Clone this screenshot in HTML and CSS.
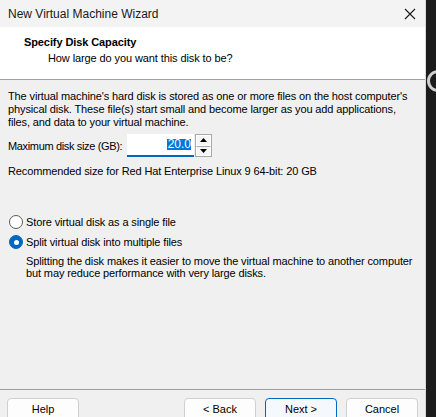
FILE: index.html
```html
<!DOCTYPE html>
<html>
<head>
<meta charset="utf-8">
<link rel="stylesheet" href="styles.css">
</head>
<body>
<div class="screen">
  <div class="window">
    <div class="titlebar">
      <span class="title">New Virtual Machine Wizard</span>
      <svg class="close" width="12" height="12" viewBox="0 0 12 12"><path d="M1 1L11 11M11 1L1 11" stroke="#1a1a1a" stroke-width="1.1" fill="none"/></svg>
    </div>
    <div class="header">
      <div class="h-title">Specify Disk Capacity</div>
      <div class="h-sub">How large do you want this disk to be?</div>
    </div>
    <div class="content">
      <p class="intro">The virtual machine's hard disk is stored as one or more files on the host computer's<br>physical disk. These file(s) start small and become larger as you add applications,<br>files, and data to your virtual machine.</p>
      <div class="size-row">
        <span class="label">Maximum disk size (GB):</span>
        <div class="input"><span class="sel">20.0</span></div>
        <div class="spin">
          <div class="spin-btn"><svg width="7" height="4" viewBox="0 0 7 4"><path d="M3.5 0L7 4H0Z" fill="#000"/></svg></div>
          <div class="spin-btn"><svg width="7" height="4" viewBox="0 0 7 4"><path d="M0 0H7L3.5 4Z" fill="#000"/></svg></div>
        </div>
      </div>
      <p class="rec">Recommended size for Red Hat Enterprise Linux 9 64-bit: 20 GB</p>
      <div class="radios">
        <div class="radio-row"><span class="radio"></span><span>Store virtual disk as a single file</span></div>
        <div class="radio-row"><span class="radio checked"></span><span>Split virtual disk into multiple files</span></div>
        <p class="desc">Splitting the disk makes it easier to move the virtual machine to another computer<br>but may reduce performance with very large disks.</p>
      </div>
    </div>
    <div class="footer">
      <button class="btn">Help</button>
      <div class="spacer"></div>
      <button class="btn">&lt; Back</button>
      <button class="btn primary">Next &gt;</button>
      <button class="btn">Cancel</button>
    </div>
  </div>
  <div class="side"><span class="ring"></span></div>
</div>
</body>
</html>
```
FILE: styles.css
```css
* { box-sizing: border-box; }
html, body { margin: 0; padding: 0; }
body {
  width: 436px;
  height: 417px;
  overflow: hidden;
  background: #1c1c1c;
  font-family: "Liberation Sans", Arial, sans-serif;
  font-size: 11px;
  color: #000;
}
.screen { display: flex; height: 417px; }
.window {
  width: 426px;
  height: 417px;
  background: #f0f0f0;
  display: flex;
  flex-direction: column;
  border-right: 1px solid #d8d8d8;
}
.side { flex: 1; position: relative; overflow: hidden; }
.ring {
  position: absolute;
  left: 1px;
  top: 70px;
  width: 22px;
  height: 22px;
  border: 3px solid #cfcfcf;
  border-radius: 50%;
}
.titlebar {
  height: 27px;
  background: #f3f3f3;
  display: flex;
  align-items: center;
  padding-left: 8px;
  padding-right: 9px;
}
.title { font-size: 12px; flex: 1; color: #1a1a1a; }
.close { display: block; }
.header {
  height: 53px;
  background: #fff;
  border-bottom: 1px solid #a0a0a0;
  padding: 8px 0 0 24px;
}
.h-title { font-weight: bold; line-height: 14px; letter-spacing: -0.1px; }
.h-sub { padding-left: 24px; line-height: 14px; margin-top: 2px; letter-spacing: -0.1px; }
.content { flex: 1; padding: 10px 8px 0 8px; letter-spacing: -0.12px; }
.intro { margin: 0; line-height: 13px; white-space: nowrap; }
.size-row {
  display: flex;
  align-items: center;
  margin-top: 5px;
  height: 23px;
}
.label { width: 119px; flex: none; white-space: nowrap; letter-spacing: -0.35px; }
.input {
  width: 67px;
  height: 23px;
  background: #fff;
  border-bottom: 2px solid #0067c0;
  display: flex;
  align-items: center;
  justify-content: flex-end;
  padding-right: 3px;
  font-size: 12px;
  letter-spacing: 0;
}
.sel { background: #0078d7; color: #fff; line-height: 11px; padding: 0 0 0 1px; }
.spin {
  margin-left: 1px;
  width: 17px;
  height: 23px;
  display: flex;
  flex-direction: column;
  border: 1px solid #a8a8a8;
  background: #f5f5f5;
}
.spin-btn {
  flex: 1;
  display: flex;
  align-items: center;
  justify-content: center;
  border: 1px solid #fff;
}
.spin-btn + .spin-btn { border-top: 1px solid #a8a8a8; }
.spin-btn svg { display: block; }
.rec { margin: 8px 0 0 0; line-height: 13px; }
.radios { margin-top: 37px; }
.radio-row { display: flex; align-items: center; height: 14px; margin-bottom: 6px; }
.radio {
  width: 14px;
  height: 14px;
  border-radius: 50%;
  border: 1px solid #5b5b5b;
  background: #fff;
  margin: 0 3px 0 1px;
  flex: none;
}
.radio.checked {
  background: #0067c0;
  border-color: #0067c0;
  position: relative;
}
.radio.checked::after {
  content: "";
  position: absolute;
  left: 3.5px;
  top: 3.5px;
  width: 5px;
  height: 5px;
  border-radius: 50%;
  background: #fff;
}
.desc { margin: 0 0 0 18px; line-height: 12px; white-space: nowrap; }
.footer {
  height: 28px;
  border-top: 1px solid #a0a0a0;
  display: flex;
  align-items: flex-start;
  padding: 8px 7px 0 7px;
  gap: 9px;
}
.spacer { flex: 1; }
.btn {
  width: 72px;
  height: 23px;
  font-family: inherit;
  font-size: 11px;
  background: #fdfdfd;
  border: 1px solid #d0d0d0;
  border-radius: 4px;
  color: #000;
  padding: 0 0 2px 0;
  flex: none;
}
.btn.primary { border-color: #0067c0; background: #f5f9fd; }
```
